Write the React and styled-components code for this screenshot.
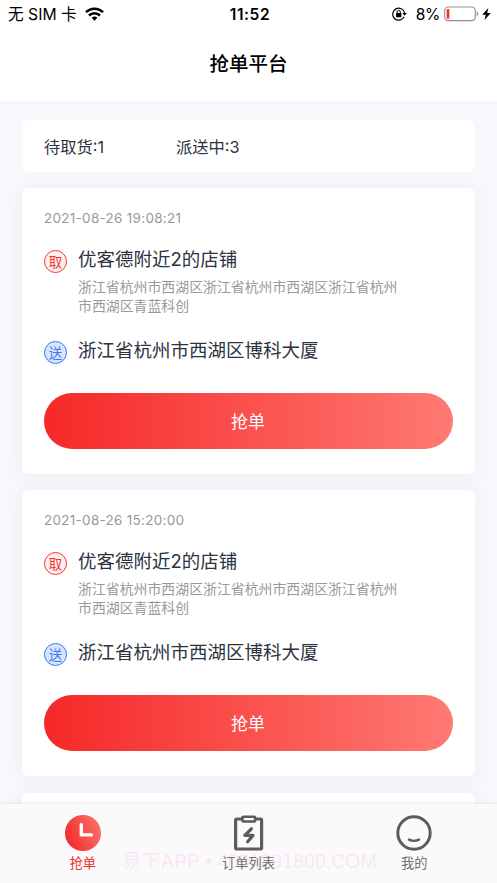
import React from 'react';
import styled, { createGlobalStyle } from 'styled-components';

const orders = [
  {
    id: 1,
    time: '2021-08-26 19:08:21',
    shop: '优客德附近2的店铺',
    shopAddress: '浙江省杭州市西湖区浙江省杭州市西湖区浙江省杭州市西湖区青蓝科创',
    destination: '浙江省杭州市西湖区博科大厦',
  },
  {
    id: 2,
    time: '2021-08-26 15:20:00',
    shop: '优客德附近2的店铺',
    shopAddress: '浙江省杭州市西湖区浙江省杭州市西湖区浙江省杭州市西湖区青蓝科创',
    destination: '浙江省杭州市西湖区博科大厦',
  },
];

function WifiIcon() {
  return (
    <svg width="19" height="14" viewBox="0 0 19 14" fill="none" stroke="#000" strokeWidth="2.5">
      <path d="M1 5.1a12.2 12.2 0 0 1 17 0" />
      <path d="M4 8.5a7.8 7.8 0 0 1 11 0" />
      <path d="M9.5 13.7l-2.9-2.9a4.2 4.2 0 0 1 5.8 0z" fill="#000" stroke="none" />
    </svg>
  );
}

function LockIcon() {
  return (
    <svg width="15" height="14" viewBox="0 0 15 14" fill="none" stroke="#000">
      <path d="M12.1 9.8A6 6 0 1 1 12.6 6" strokeWidth="1.2" />
      <path d="M10.3 6h4.6l-2.3 2.8z" fill="#000" stroke="none" />
      <rect x="4" y="6" width="5.4" height="4.2" rx="0.6" fill="#000" stroke="none" />
      <path d="M5.1 6.2V5a1.6 1.6 0 0 1 3.2 0v1.2" strokeWidth="1" />
    </svg>
  );
}

function BatteryIcon() {
  return (
    <svg width="35" height="16" viewBox="0 0 35 16">
      <rect x="0.7" y="1" width="30.6" height="13.6" rx="3.6" fill="none" stroke="#8f8f8f" strokeWidth="1.1" />
      <rect x="2.7" y="3" width="2.6" height="9.8" rx="0.8" fill="#fb2a20" />
      <path d="M32.7 5.5c2 .8 2 3.9 0 4.7z" fill="#8f8f8f" />
    </svg>
  );
}

function BoltIcon() {
  return (
    <svg width="9" height="12" viewBox="0 0 8 12" preserveAspectRatio="none">
      <path d="M5.6 0L0.2 6.7h3.1L2.2 12l5.6-7H4.6z" fill="#000" />
    </svg>
  );
}

function ClockIcon() {
  return (
    <svg width="36" height="36" viewBox="0 0 36 36">
      <defs>
        <linearGradient id="clock" x1="0" y1="0.7" x2="1" y2="0.3">
          <stop offset="0" stopColor="#f32a2a" />
          <stop offset="1" stopColor="#fb706b" />
        </linearGradient>
      </defs>
      <circle cx="18" cy="18" r="18" fill="url(#clock)" />
      <path d="M16.3 9.8v10.1h10" fill="none" stroke="#fff" strokeWidth="3.4" strokeLinecap="round" strokeLinejoin="round" />
    </svg>
  );
}

function ClipboardIcon() {
  return (
    <svg width="36" height="36" viewBox="0 0 36 36" fill="none" stroke="#5c5c5c" strokeLinejoin="round">
      <rect x="5.6" y="4" width="26" height="30" rx="1.2" strokeWidth="3.2" />
      <rect x="12.5" y="1.7" width="12.6" height="4.8" rx="0.8" fill="#fafafa" strokeWidth="2.6" />
      <path d="M21.4 13.8l-6.6 6.6h8.2l-5.4 6.4" strokeWidth="3.2" strokeLinecap="round" />
    </svg>
  );
}

function FaceIcon() {
  return (
    <svg width="36" height="36" viewBox="0 0 36 36" fill="none" stroke="#5c5c5c">
      <circle cx="18" cy="18" r="16.2" strokeWidth="3" />
      <path d="M13 24.6q5 2.6 10 0" strokeWidth="2.4" strokeLinecap="round" />
    </svg>
  );
}

function OrderCard({ order }) {
  return (
    <Card>
      <OrderTime>{order.time}</OrderTime>
      <Stop>
        <Badge $color="#f23434" $fill="#fff0f0">取</Badge>
        <div>
          <StopName>{order.shop}</StopName>
          <StopAddress>{order.shopAddress}</StopAddress>
        </div>
      </Stop>
      <Stop>
        <Badge $color="#3b78f0" $fill="#d6e4ff">送</Badge>
        <StopName>{order.destination}</StopName>
      </Stop>
      <GrabButton>抢单</GrabButton>
    </Card>
  );
}

function App() {
  return (
    <Screen>
      <GlobalStyle />
      <StatusBar>
        <StatusSide>
          <Carrier>无 SIM 卡</Carrier>
          <WifiIcon />
        </StatusSide>
        <Clock>11:52</Clock>
        <StatusSide $end>
          <LockIcon />
          <Percent>8%</Percent>
          <BatteryIcon />
          <BoltIcon />
        </StatusSide>
      </StatusBar>
      <Header>抢单平台</Header>
      <Content>
        <Summary>
          <span>待取货:1</span>
          <span>派送中:3</span>
        </Summary>
        {orders.map((order) => <OrderCard key={order.id} order={order} />)}
        <Card />
      </Content>
      <TabBar>
        <Watermark>易下APP • 4001891800.COM</Watermark>
        <Tab $active>
          <ClockIcon />
          <TabLabel>抢单</TabLabel>
        </Tab>
        <Tab>
          <ClipboardIcon />
          <TabLabel>订单列表</TabLabel>
        </Tab>
        <Tab>
          <FaceIcon />
          <TabLabel>我的</TabLabel>
        </Tab>
      </TabBar>
    </Screen>
  );
}

export default App;

const GlobalStyle = createGlobalStyle`
  * {
    box-sizing: border-box;
  }

  body {
    margin: 0;
    font-family: Inter, "Noto Sans CJK SC", sans-serif;
  }

  svg {
    display: block;
    flex-shrink: 0;
  }
`;

const Screen = styled.div`
  display: flex;
  flex-direction: column;
  height: 883px;
  overflow: hidden;
  background: #f7f8fc;
`;

const StatusBar = styled.div`
  display: grid;
  grid-template-columns: 1fr auto 1fr;
  align-items: center;
  flex-shrink: 0;
  height: 28px;
  padding: 0 6px 0 8px;
  background: #fff;
  color: #000;
`;

const StatusSide = styled.div`
  display: flex;
  align-items: center;
  justify-content: ${({ $end }) => ($end ? 'flex-end' : 'flex-start')};

  svg:last-child {
    margin-left: ${({ $end }) => ($end ? '3px' : '0')};
  }
`;

const Carrier = styled.span`
  margin-right: 8px;
  padding-top: 1px;
  font-size: 15.7px;
  line-height: 27px;
  white-space: nowrap;
`;

const Clock = styled.span`
  padding-left: 1px;
  font-size: 15.5px;
  font-weight: 600;
  letter-spacing: 0.6px;
`;

const Percent = styled.span`
  margin: 0 4px 0 9px;
  font-size: 15.5px;
  letter-spacing: -0.3px;
`;

const Header = styled.div`
  flex-shrink: 0;
  height: 73px;
  background: #fff;
  color: #000;
  font-size: 19.5px;
  font-weight: 500;
  line-height: 73px;
  text-align: center;
`;

const Content = styled.div`
  display: flex;
  flex: 1;
  flex-direction: column;
  gap: 16px;
  min-height: 0;
  padding: 19px 22px 0;
  overflow: hidden;
`;

const Summary = styled.div`
  display: grid;
  grid-template-columns: 132px 1fr;
  flex-shrink: 0;
  height: 52px;
  padding: 0 22px;
  border-radius: 6px;
  background: #fff;
  color: #2b3340;
  font-size: 16.3px;
  line-height: 54px;
`;

const Card = styled.div`
  flex-shrink: 0;
  height: 286px;
  padding: 22px 22px 0;
  border-radius: 6px;
  background: #fff;
  box-shadow: 0 2px 18px rgba(40, 60, 100, 0.06);

  &:last-child {
    margin-top: 1px;
  }
`;

const OrderTime = styled.div`
  color: #999;
  font-size: 13.5px;
  letter-spacing: 0.28px;
  line-height: 17px;
`;

const Stop = styled.div`
  display: flex;
  align-items: flex-start;
  margin-top: 18px;

  & + & {
    margin-top: 20px;
  }
`;

const Badge = styled.div`
  flex-shrink: 0;
  width: 23px;
  height: 23px;
  margin: 5px 11px 0 0;
  border: 1.5px solid ${({ $color }) => $color};
  border-radius: 50%;
  background: ${({ $fill }) => $fill};
  color: ${({ $color }) => $color};
  font-size: 13.5px;
  line-height: 22px;
  text-align: center;
`;

const StopName = styled.div`
  color: #2b3340;
  font-size: 18.5px;
  line-height: 28px;
`;

const StopAddress = styled.div`
  width: 325px;
  margin-top: 5px;
  color: #999;
  font-size: 13.9px;
  line-height: 19px;
`;

const GrabButton = styled.button`
  display: block;
  width: 100%;
  height: 56px;
  margin-top: 29px;
  padding: 3px 1px 0 0;
  border: 0;
  border-radius: 28px;
  background: linear-gradient(90deg, #f52828, #ff7a73);
  color: #fff;
  font-family: inherit;
  font-size: 17px;
  line-height: 53px;
`;

const TabBar = styled.div`
  position: relative;
  display: grid;
  grid-template-columns: repeat(3, 1fr);
  flex-shrink: 0;
  height: 79px;
  background: #fafafa;
  box-shadow: 0 -1px 3px rgba(0, 0, 0, 0.08);
`;

const Tab = styled.div`
  position: relative;
  display: flex;
  flex-direction: column;
  align-items: center;
  padding-top: 11px;
  color: ${({ $active }) => ($active ? '#f02c2c' : '#707070')};
`;

const TabLabel = styled.span`
  margin-top: 2px;
  font-size: 13.2px;
  line-height: 20px;
`;

const Watermark = styled.div`
  position: absolute;
  top: 43px;
  left: 122px;
  color: rgba(250, 190, 240, 0.35);
  font-family: "Liberation Sans", "Noto Sans CJK SC", sans-serif;
  font-size: 19.5px;
  line-height: 28px;
  white-space: nowrap;
  pointer-events: none;
`;
